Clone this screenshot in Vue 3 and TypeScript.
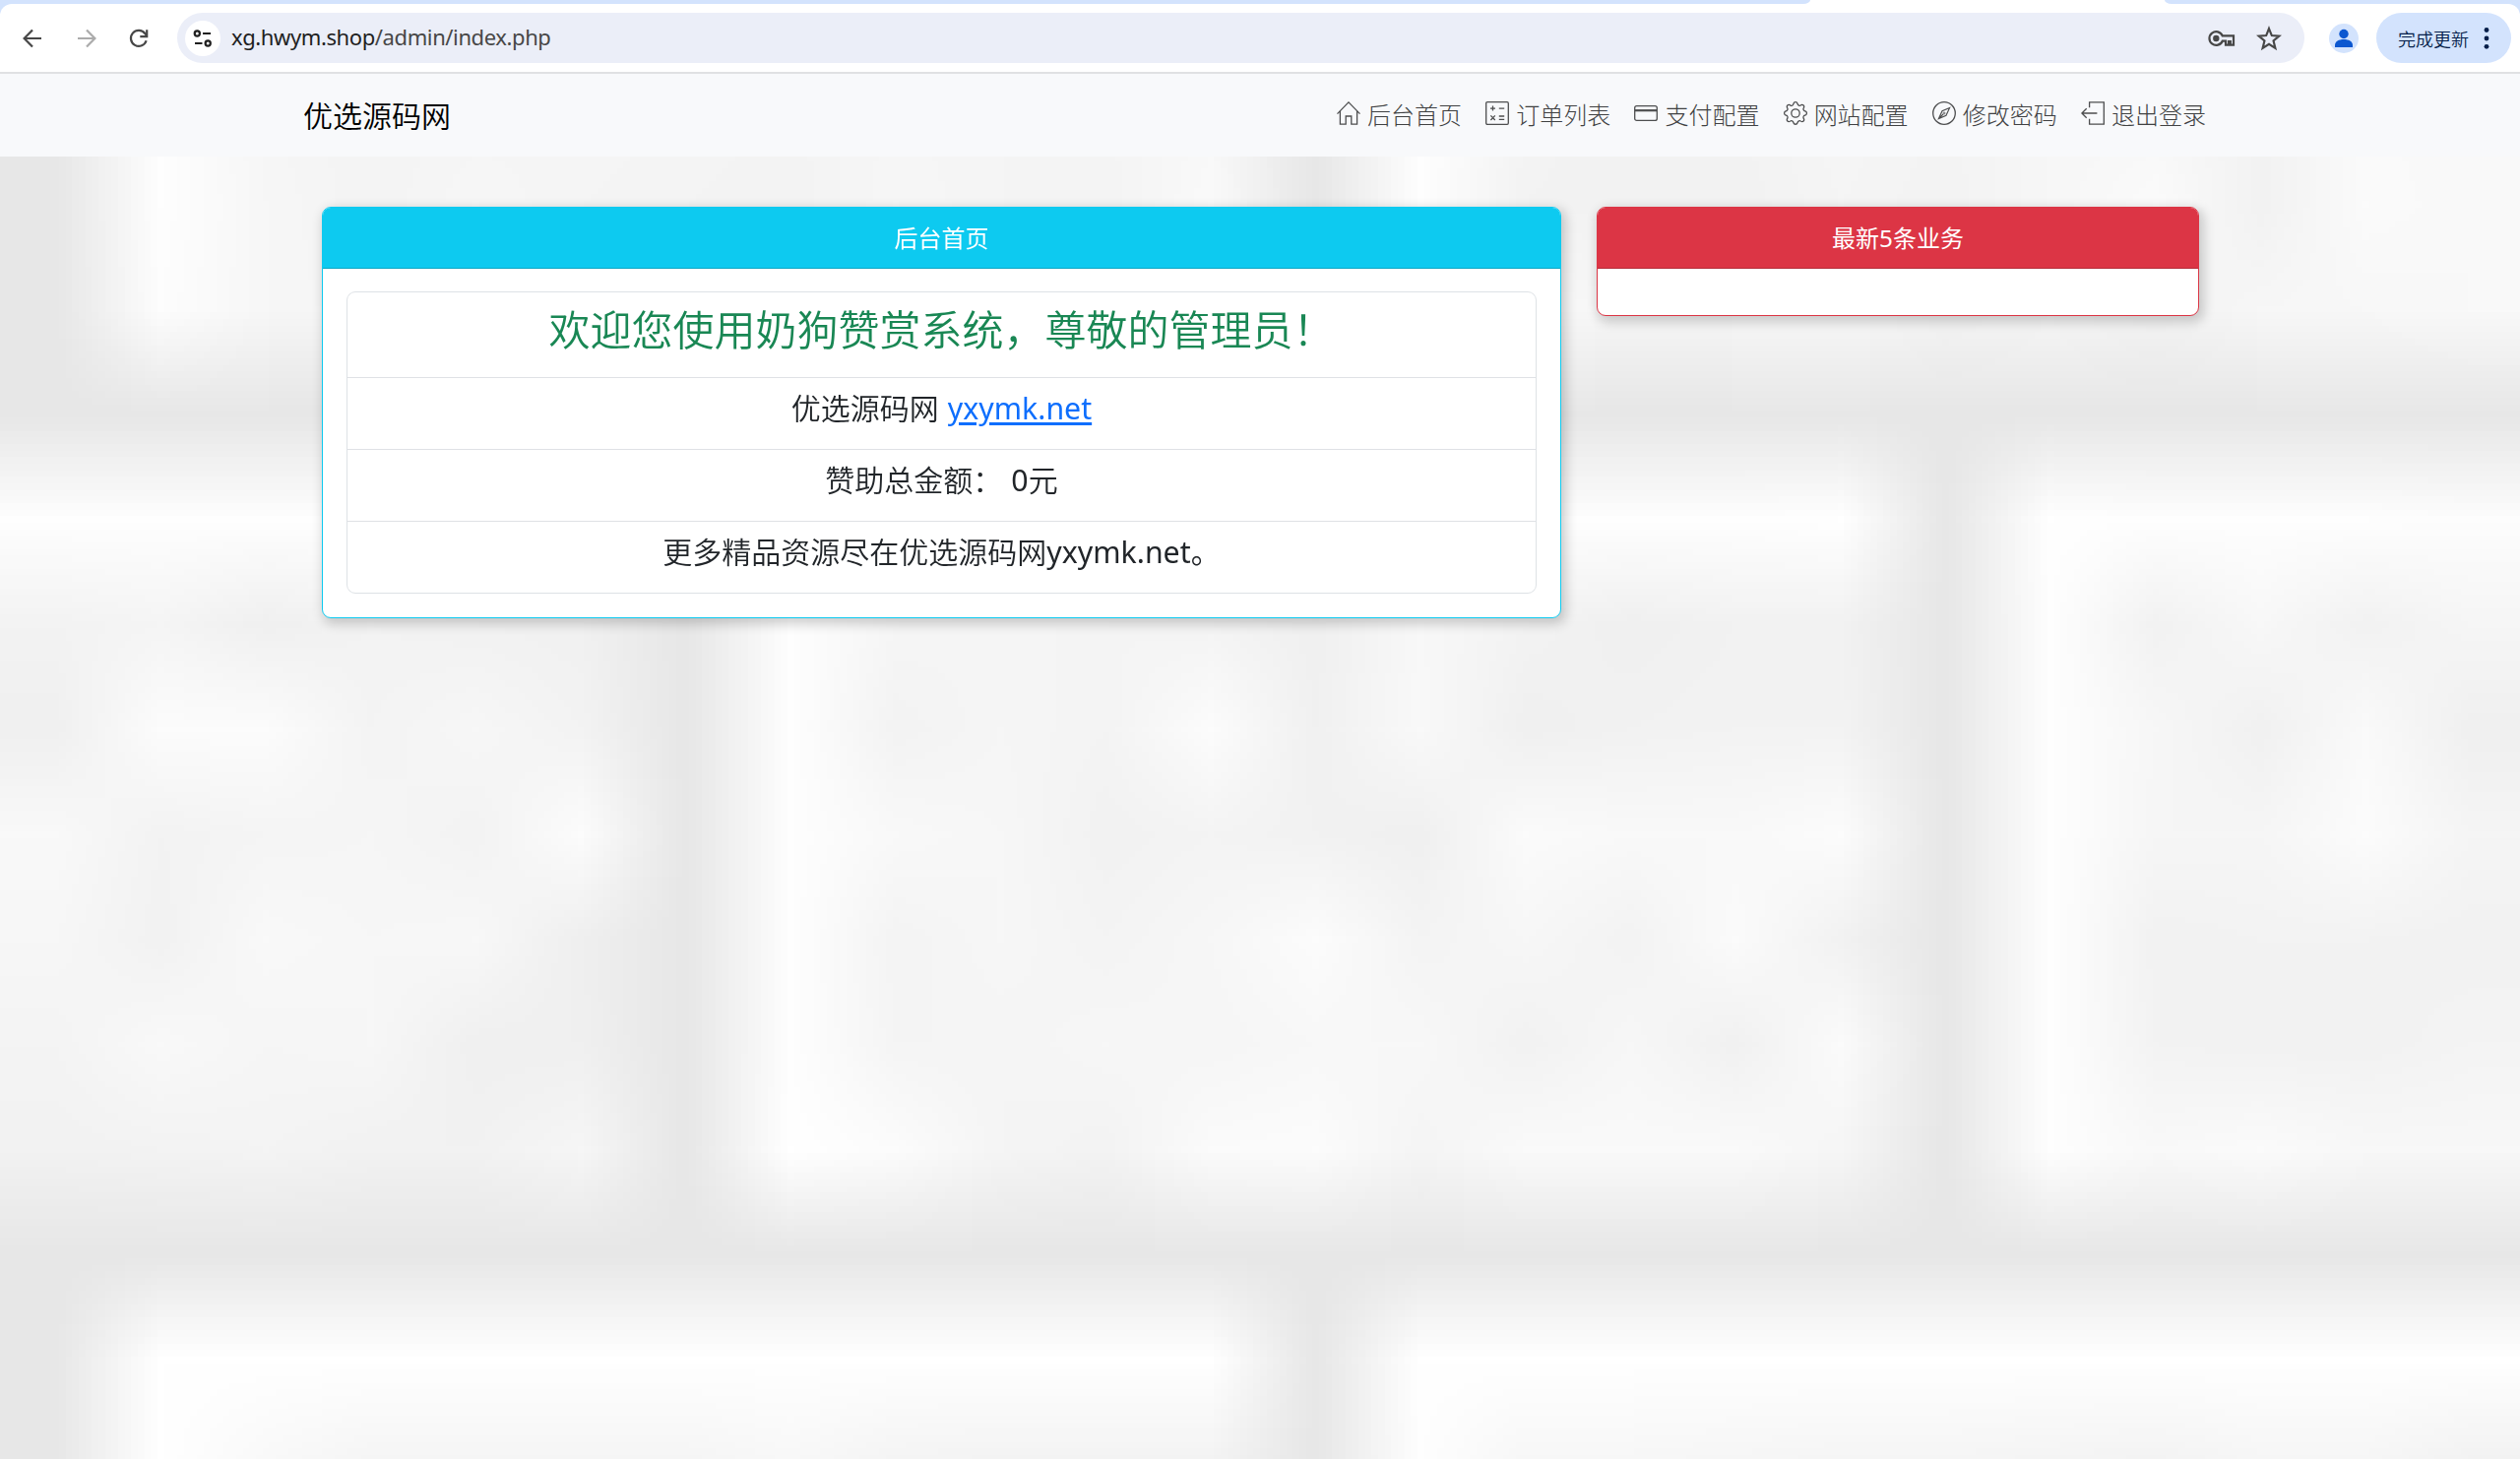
<script setup lang="ts">
import { onMounted, ref } from 'vue'

interface NavItem {
  label: string
  icon: 'home' | 'orders' | 'card' | 'gear' | 'compass' | 'exit'
}

const navItems: NavItem[] = [
  { label: '后台首页', icon: 'home' },
  { label: '订单列表', icon: 'orders' },
  { label: '支付配置', icon: 'card' },
  { label: '网站配置', icon: 'gear' },
  { label: '修改密码', icon: 'compass' },
  { label: '退出登录', icon: 'exit' },
]

const total = 0

// Grey levels of the brick wall texture, one number per texel.
const wall: number[][] = [
  [231, 254, 246, 244, 245, 246, 245, 244, 246, 245, 245, 248, 231, 254, 244, 242, 243, 246, 244, 247, 247, 243, 250, 249],
  [231, 254, 247, 244, 247, 245, 244, 243, 247, 245, 244, 250, 231, 254, 243, 242, 242, 245, 243, 247, 251, 242, 251, 249],
  [231, 253, 247, 245, 245, 246, 245, 244, 246, 245, 245, 248, 231, 254, 249, 246, 247, 248, 244, 246, 243, 247, 248, 249],
  [231, 231, 231, 231, 231, 231, 231, 231, 231, 231, 231, 231, 231, 231, 231, 231, 231, 231, 231, 231, 231, 231, 231, 231],
  [254, 254, 254, 254, 254, 254, 231, 254, 254, 254, 254, 254, 254, 254, 254, 254, 254, 255, 231, 255, 254, 254, 254, 253],
  [243, 245, 240, 243, 242, 241, 231, 254, 246, 245, 245, 244, 240, 248, 243, 240, 242, 242, 231, 254, 242, 248, 242, 246],
  [240, 252, 252, 244, 247, 243, 231, 254, 243, 246, 244, 252, 241, 249, 240, 242, 243, 243, 231, 254, 247, 241, 250, 240],
  [249, 243, 245, 246, 243, 252, 231, 254, 249, 247, 242, 244, 242, 240, 251, 249, 249, 252, 231, 254, 246, 246, 252, 245],
  [247, 242, 249, 247, 248, 239, 231, 254, 244, 247, 244, 247, 252, 244, 247, 243, 251, 242, 231, 254, 242, 243, 243, 242],
  [244, 249, 246, 247, 240, 240, 231, 254, 245, 245, 247, 246, 248, 248, 242, 247, 241, 251, 231, 254, 243, 242, 242, 244],
  [242, 243, 244, 242, 242, 246, 231, 255, 252, 245, 243, 251, 252, 245, 250, 250, 250, 246, 231, 254, 249, 251, 248, 248],
  [231, 231, 231, 231, 231, 231, 231, 231, 231, 231, 231, 231, 231, 231, 231, 231, 231, 231, 231, 231, 231, 231, 231, 231],
  [231, 255, 255, 255, 255, 255, 255, 255, 255, 255, 255, 255, 231, 255, 255, 255, 255, 255, 255, 255, 255, 255, 255, 255],
  [231, 255, 249, 245, 245, 245, 245, 248, 244, 243, 243, 243, 231, 254, 247, 247, 246, 245, 245, 244, 243, 246, 246, 242],
]

const wallCanvas = ref<HTMLCanvasElement | null>(null)

onMounted(() => {
  const ctx = wallCanvas.value?.getContext('2d')
  if (!ctx) return
  wall.forEach((row, y) =>
    row.forEach((g, x) => {
      ctx.fillStyle = `rgb(${g}, ${g}, ${g})`
      ctx.fillRect(x, y, 1, 1)
    }),
  )
})
</script>

<template>
  <div class="window">
    <div class="tabstrip">
      <div class="inactive left"></div>
      <div class="active"></div>
      <div class="inactive right"></div>
    </div>
    <div class="toolbar-wrap">
      <div class="toolbar">
        <svg class="tool back" viewBox="0 0 24 24"><path d="M21 12H4M12 3.5 3.6 12l8.4 8.5" /></svg>
        <svg class="tool forward" viewBox="0 0 24 24"><path d="M3 12h17M12 3.5l8.4 8.5-8.4 8.5" /></svg>
        <svg class="tool reload" viewBox="0 0 24 24"><path d="M19.6 14.2A8 8 0 1 1 18.3 7l1.9 2.4" /><path d="M20.2 3.2v6.9h-6.9" /></svg>
        <div class="omnibox">
          <span class="site">
            <svg viewBox="0 0 20 20"><circle cx="4.3" cy="5" r="2.6" /><path d="M10 5h8M2 15h7.5" /><circle cx="15.2" cy="15" r="2.6" /></svg>
          </span>
          <span class="url">xg.hwym.shop<i>/admin/index.php</i></span>
          <svg class="key" viewBox="0 0 28 18">
            <path d="M14.7 6.3A6.9 6.9 0 1 0 14.7 11.7H18V15.6h3V12.2h1.8v3.4h3.2V6.3Z" />
            <circle cx="8.3" cy="9" r="3.2" />
          </svg>
          <svg class="star" viewBox="0 0 24 24"><path d="M12 2.8 14.6 9.3 21.6 9.8 16.2 14.3 17.9 21.2 12 17.4 6.1 21.2 7.8 14.3 2.4 9.8 9.4 9.3Z" /></svg>
        </div>
        <span class="avatar">
          <svg viewBox="0 0 30 30"><circle cx="15" cy="10.5" r="4.7" /><path d="M6 24v-2c0-4 4-6 9-6s9 2 9 6v2Z" /></svg>
        </span>
        <div class="update">
          <span>完成更新</span>
          <svg viewBox="0 0 6 24"><circle cx="3" cy="3.5" r="2.4" /><circle cx="3" cy="12" r="2.4" /><circle cx="3" cy="20.3" r="2.4" /></svg>
        </div>
      </div>
    </div>

    <nav class="navbar">
      <a class="brand">优选源码网</a>
      <ul>
        <li v-for="item in navItems" :key="item.icon">
          <svg v-if="item.icon === 'home'" viewBox="0 0 24 24"><path d="M.5 12.6 12 .9l11.5 11.7M3.4 9.8v13.4h5.8V15h5.6v8.2h5.8V9.8" /></svg>
          <svg v-else-if="item.icon === 'orders'" viewBox="0 0 24 24">
            <rect x=".7" y=".7" width="22.6" height="22.6" rx="1.2" />
            <path d="M7.5 4.6v5M5 7.1h5M13.8 7.1h5.4M5.4 14.4l4.4 4.6M9.8 14.4 5.4 19M13.8 15h5.4M13.8 18.3h5.4" />
          </svg>
          <svg v-else-if="item.icon === 'card'" viewBox="0 0 24 24">
            <rect x=".7" y="4.6" width="22.6" height="14.8" rx="2" />
            <path d="M1 9.2h22" stroke-width="2.2" />
          </svg>
          <svg v-else-if="item.icon === 'gear'" viewBox="0 0 16 16">
            <path
              stroke-width=".85"
              d="M9.35 1.5c-.4-1.35-2.3-1.35-2.7 0l-.094.319a1.3 1.3 0 0 1-2.1.8l-.292-.16c-1.2-.6-2.4.6-1.8 1.8l.159.292a1.4 1.4 0 0 1-.8 2l-.319.094c-1.35.4-1.35 2.3 0 2.7l.319.094a1.4 1.4 0 0 1 .8 2l-.16.292c-.6 1.2.6 2.4 1.8 1.8l.292-.159a1.4 1.4 0 0 1 2.1.8l.094.319c.4 1.35 2.3 1.35 2.7 0l.094-.319a1.4 1.4 0 0 1 2.1-.8l.292.16c1.2.6 2.4-.6 1.8-1.8l-.159-.292a1.4 1.4 0 0 1 .8-2l.319-.094c1.35-.4 1.35-2.3 0-2.7l-.319-.094a1.4 1.4 0 0 1-.8-2l.16-.292c.6-1.2-.6-2.4-1.8-1.8l-.292.159a1.4 1.4 0 0 1-2.1-.8Z"
            />
            <circle cx="8" cy="8" r="2.8" stroke-width=".85" />
          </svg>
          <svg v-else-if="item.icon === 'compass'" viewBox="0 0 24 24">
            <circle cx="12" cy="12" r="11.3" />
            <path d="M17.6 6.4 10 9.8 6.4 17.6 14 14.2ZM6.4 17.6l4.6-4.6" stroke-width="1.15" />
            <circle cx="12" cy="12" r="1" stroke-width=".8" />
          </svg>
          <svg v-else viewBox="0 0 24 24"><path d="M8.6 6.2V.8h14.7v22.4H8.6v-5.4M16.4 12H.9M5.7 7.2.9 12l4.8 4.8" /></svg>
          <span>{{ item.label }}</span>
        </li>
      </ul>
    </nav>

    <main class="page">
      <canvas ref="wallCanvas" class="wall" width="24" height="14"></canvas>
      <section class="card info">
        <header>后台首页</header>
        <div class="body">
          <ul class="list">
            <li class="welcome">欢迎您使用奶狗赞赏系统，尊敬的管理员！</li>
            <li>优选源码网<span class="gap"></span><a class="latin">yxymk.net</a></li>
            <li>赞助总金额：<span class="gap"></span><span class="latin">{{ total }}</span>元</li>
            <li>更多精品资源尽在优选源码网<span class="latin">yxymk.net</span>。</li>
          </ul>
        </div>
      </section>
      <section class="card danger">
        <header>最新<span class="latin">5</span>条业务</header>
        <div class="body"></div>
      </section>
    </main>
  </div>
</template>

<style>
body {
  margin: 0;
  overflow: hidden;
}
</style>

<style scoped>
* {
  box-sizing: border-box;
}
.window {
  width: 2560px;
  height: 1482px;
  display: flex;
  flex-direction: column;
  font-family: 'Noto Sans CJK SC', 'Noto Sans', sans-serif;
  color: #212529;
}
svg {
  display: block;
  flex: none;
  fill: none;
}
ul {
  list-style: none;
  margin: 0;
  padding: 0;
}
.latin {
  font-family: 'Noto Sans', sans-serif;
  font-size: 1.01em;
  font-weight: 400;
}

/* browser chrome */
.tabstrip {
  display: flex;
  height: 4px;
  background: #fff;
}
.inactive {
  background: #d3e3fd;
}
.left {
  width: 1839px;
  border-bottom-right-radius: 7px 4px;
}
.active {
  width: 360px;
}
.right {
  flex: 1;
  border-bottom-left-radius: 7px 4px;
}
.toolbar-wrap {
  background: #d3e3fd;
}
.toolbar {
  height: 71px;
  display: flex;
  align-items: center;
  padding: 0 9px 0 21px;
  background: #fff;
  border-bottom: 2px solid #e0e1e3;
  border-radius: 12px 12px 0 0;
}
.tool {
  width: 24px;
  height: 24px;
  stroke: #474747;
  stroke-width: 2.2;
}
.forward {
  margin-left: 31px;
  stroke: #ababab;
}
.reload {
  margin-left: 29px;
}
.omnibox {
  width: 2161px;
  height: 51px;
  margin-left: 27px;
  padding: 0 23px 0 8px;
  display: flex;
  align-items: center;
  border-radius: 26px;
  background: #ebeef8;
}
.site {
  width: 36px;
  height: 36px;
  border-radius: 50%;
  background: #fff;
  display: grid;
  place-items: center;
}
.site svg {
  width: 20px;
  height: 20px;
  stroke: #1f1f1f;
  stroke-width: 2.2;
}
.url {
  margin-left: 11px;
  padding-bottom: 3px;
  flex: 1;
  font: 22px/48px 'Noto Sans', sans-serif;
  letter-spacing: -0.4px;
  color: #1f1f1f;
  white-space: nowrap;
}
.url i {
  font-style: normal;
  color: #474747;
}
.key {
  width: 28px;
  height: 18px;
  stroke: #474747;
  stroke-width: 2.2;
}
.key circle {
  fill: #474747;
  stroke: none;
}
.star {
  width: 26px;
  height: 26px;
  margin-left: 21px;
  stroke: #474747;
  stroke-width: 2;
}
.avatar {
  width: 30px;
  height: 30px;
  margin-left: 25px;
  border-radius: 50%;
  background: #d3e3fd;
}
.avatar svg {
  fill: #0b57d0;
}
.update {
  width: 137px;
  height: 51px;
  margin-left: 18px;
  padding: 0 22px;
  display: flex;
  align-items: center;
  justify-content: space-between;
  border-radius: 26px;
  background: #d3e3fd;
  color: #041e49;
  font-size: 18px;
  font-weight: 350;
  line-height: 26px;
  white-space: nowrap;
}
.update svg {
  width: 6px;
  height: 24px;
  fill: #041e49;
}

/* site navigation */
.navbar {
  height: 84px;
  flex: none;
  display: flex;
  align-items: center;
  justify-content: space-between;
  padding: 0 319px 0 308px;
  background: #f8f9fb;
}
.brand {
  font-size: 30px;
  font-weight: 350;
  line-height: 45px;
  padding-bottom: 2px;
  color: #000;
}
.navbar ul {
  display: flex;
  gap: 24.2px;
}
.navbar li {
  display: flex;
  align-items: center;
  gap: 7px;
  font-size: 24px;
  line-height: 36px;
  font-weight: 300;
  color: #404142;
}
.navbar li span {
  padding-bottom: 2px;
}
.navbar li svg {
  width: 24px;
  height: 24px;
  margin-bottom: 4px;
  stroke: #4d4e4f;
  stroke-width: 1.3;
}

.page {
  position: relative;
  flex: 1;
  min-height: 0;
  overflow: hidden;
  display: flex;
  align-items: flex-start;
  gap: 36px;
  padding: 51px 326px 0 327px;
  background: #f4f4f4;
}
/* the tiny texture is stretched behind the cards and smoothed by the browser */
.wall {
  position: absolute;
  left: 0;
  top: -114.8px;
  width: 2560px;
  height: 1493.3px;
}
.card {
  position: relative;
  border: 1px solid;
  border-radius: 9px;
  background: #fff;
  box-shadow: 3px 4px 12px 2px rgba(0, 0, 0, 0.19);
  overflow: hidden;
}
.card header {
  height: 62px;
  border-bottom: 1px solid rgba(0, 0, 0, 0.176);
  color: #fff;
  text-align: center;
  font-size: 24px;
  line-height: 59px;
}
.info {
  width: 1259px;
  border-color: #0dcaf0;
}
.info header {
  background: #0dcaf0;
}
.danger {
  width: 612px;
  border-color: #dc3545;
}
.danger header {
  background: #dc3545;
}
.body {
  padding: 23px 24px 24px;
}
.list {
  border: 1px solid #dee2e6;
  border-radius: 9px;
}
.list li {
  height: 73px;
  border-bottom: 1px solid #dfe1e5;
  text-align: center;
  font-size: 30px;
  font-weight: 350;
  line-height: 58px;
  white-space: nowrap;
}
.list li:last-child {
  height: 72px;
  border-bottom: 0;
}
.list .welcome {
  height: 87px;
  font-size: 42px;
  line-height: 72px;
  color: #198754;
}
.gap {
  display: inline-block;
  width: 9px;
}
.list a {
  color: #0d6efd;
  text-decoration: underline;
  text-decoration-thickness: 3px;
  text-underline-offset: 3px;
}
</style>
